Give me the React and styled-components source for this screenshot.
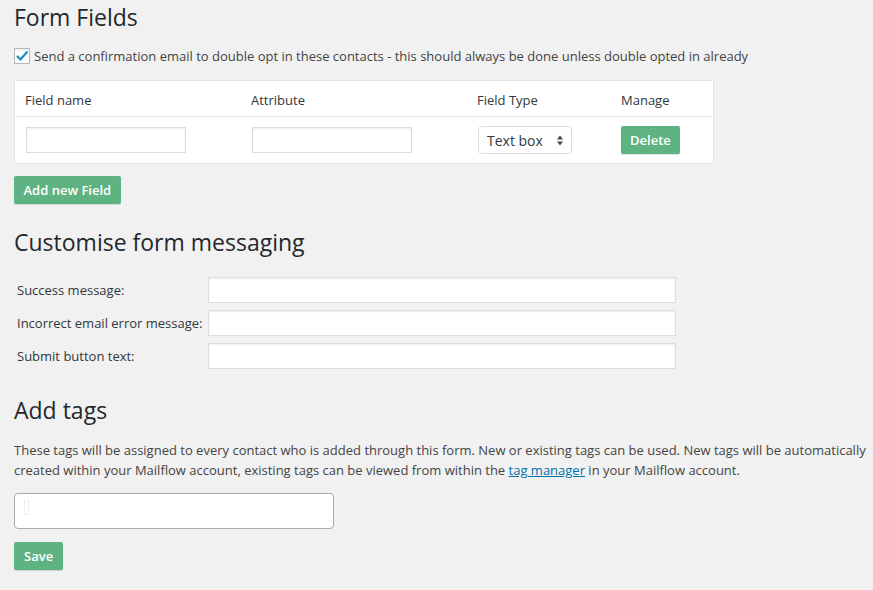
import React from "react";
import styled, { createGlobalStyle } from "styled-components";

const Global = createGlobalStyle`
  html, body { margin: 0; padding: 0; background: #f1f1f1; }
  body { font-family: "Open Sans", "Noto Sans", sans-serif; color: #23282d; font-size: 13px; }
  * { box-sizing: border-box; }
`;

const Page = styled.div`
  padding: 0 14px 20px 14px;
  width: 873px;
`;

const Heading = styled.h2`
  margin: 0;
  font-weight: 400;
  font-size: 23px;
  line-height: 29px;
  color: #23282d;
  padding-top: ${(p) => p.$top || 0}px;
`;

const CheckRow = styled.label`
  display: flex;
  align-items: center;
  gap: 4px;
  margin-top: 15px;
  font-size: 13px;
  line-height: 18px;
  color: #444;
`;

const CheckBox = styled.span`
  width: 16px;
  height: 16px;
  border: 1px solid #b4b9be;
  background: #fff;
  box-shadow: inset 0 1px 2px rgba(0,0,0,0.1);
  display: flex;
  align-items: center;
  justify-content: center;
`;

const Table = styled.div`
  margin-top: 15px;
  width: 700px;
  background: #fff;
  border: 1px solid #e5e5e5;
`;

const Row = styled.div`
  display: grid;
  grid-template-columns: 226px 226px 144px 1fr;
  align-items: center;
  padding: 0 10px;
  height: ${(p) => p.$h}px;
  border-bottom: ${(p) => (p.$divider ? "1px solid #e1e1e1" : "none")};
`;

const HeadCell = styled.div`
  font-size: 13px;
  color: #32373c;
  padding-top: 2px;
`;

const Cell = styled.div`
  display: flex;
  align-items: center;
  padding-left: ${(p) => (p.$flush ? 0 : 1)}px;
`;

const TextInput = styled.input`
  width: ${(p) => p.$w}px;
  height: ${(p) => p.$h || 26}px;
  border: 1px solid #ddd;
  background: #fff;
  box-shadow: inset 0 1px 2px rgba(0,0,0,0.07);
  font-family: inherit;
  font-size: 13px;
  padding: 3px 5px;
  outline: none;
  border-radius: ${(p) => p.$r || 0}px;
`;

const SelectBox = styled.div`
  width: 94px;
  height: 28px;
  border: 1px solid #ddd;
  border-radius: 4px;
  background: #fff;
  display: flex;
  align-items: center;
  justify-content: space-between;
  padding: 0 8px 0 8px;
  font-size: 14px;
  color: #32373c;
`;

const Button = styled.button`
  background: #5fb382;
  color: #fff;
  border: none;
  border-radius: 2px;
  font-family: inherit;
  font-weight: 600;
  font-size: 13px;
  height: ${(p) => p.$h || 28}px;
  padding: 0 ${(p) => p.$px || 11}px;
  box-shadow: 0 1px 0 rgba(0,0,0,0.12);
  cursor: pointer;
`;

const ButtonWrap = styled.div`
  margin-top: ${(p) => p.$mt}px;
`;

const MsgTable = styled.div`
  margin-top: 20px;
  display: grid;
  grid-template-columns: 191px 468px;
  row-gap: 7px;
  padding-left: 3px;
  align-items: center;
`;

const Label = styled.div`
  font-size: 13px;
  color: #32373c;
`;

const Paragraph = styled.p`
  margin: 16px 0 0 0;
  font-size: 13px;
  line-height: 19.5px;
  color: #444;
  width: 860px;
`;

const Link = styled.a`
  color: #0073aa;
  text-decoration: underline;
`;

const TagBox = styled.div`
  margin-top: 13px;
  width: 320px;
  height: 36px;
  border: 1px solid #aaa;
  border-radius: 4px;
  background: #fff;
  position: relative;
`;

const Caret = styled.span`
  position: absolute;
  left: 9px;
  top: 6px;
  width: 5px;
  height: 15px;
  border: 1px solid #eee;
`;

export default function App() {
  return (
    <Page>
      <Global />
      <Heading $top={3}>Form Fields</Heading>
      <CheckRow>
        <CheckBox>
          <svg width="14" height="14" viewBox="0 0 14 14">
            <path d="M2.5 7.5 L5.5 10.5 L11.8 3.2" fill="none" stroke="#1e8cbe" strokeWidth="2.2" strokeLinecap="round" strokeLinejoin="round" />
          </svg>
        </CheckBox>
        Send a confirmation email to double opt in these contacts - this should always be done unless double opted in already
      </CheckRow>
      <Table>
        <Row $h={36} $divider>
          <HeadCell>Field name</HeadCell>
          <HeadCell>Attribute</HeadCell>
          <HeadCell>Field Type</HeadCell>
          <HeadCell>Manage</HeadCell>
        </Row>
        <Row $h={46}>
          <Cell><TextInput $w={160} /></Cell>
          <Cell><TextInput $w={160} /></Cell>
          <Cell>
            <SelectBox>
              Text box
              <svg width="6" height="11" viewBox="0 0 6 11">
                <path d="M0 4.5 L3 0.5 L6 4.5 Z M0 6.5 L3 10.5 L6 6.5 Z" fill="#444" />
              </svg>
            </SelectBox>
          </Cell>
          <Cell $flush><Button $h={28} $px={9}>Delete</Button></Cell>
        </Row>
      </Table>
      <ButtonWrap $mt={12}>
        <Button $h={28} $px={9.5}>Add new Field</Button>
      </ButtonWrap>
      <Heading $top={24}>Customise form messaging</Heading>
      <MsgTable>
        <Label>Success message:</Label>
        <TextInput $w={468} />
        <Label>Incorrect email error message:</Label>
        <TextInput $w={468} />
        <Label>Submit button text:</Label>
        <TextInput $w={468} />
      </MsgTable>
      <Heading $top={27}>Add tags</Heading>
      <Paragraph>
        These tags will be assigned to every contact who is added through this form. New or existing tags can be used. New tags will be automatically created within your Mailflow account, existing tags can be viewed from within the <Link href="#">tag manager</Link> in your Mailflow account.
      </Paragraph>
      <TagBox><Caret /></TagBox>
      <ButtonWrap $mt={13}>
        <Button $h={28} $px={10}>Save</Button>
      </ButtonWrap>
    </Page>
  );
}
